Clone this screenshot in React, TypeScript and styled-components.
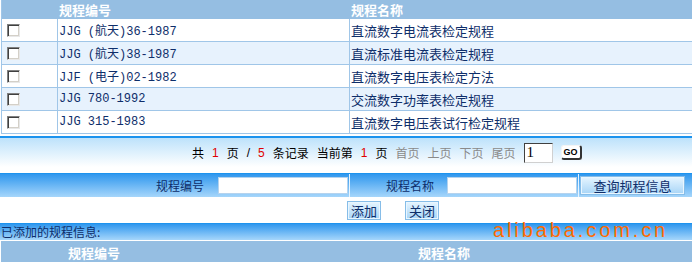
import React from 'react';
import styled, { createGlobalStyle } from 'styled-components';

const GlobalStyle = createGlobalStyle`
  body {
    margin: 0;
    background: #fff;
    font-family: "Liberation Sans", "Noto Sans CJK SC", sans-serif;
  }
`;

const color = {
  head: '#95bee2',
  line: '#a0c6e8',
  alt: '#e7f2fd',
  navy: '#0e2e6a',
  blue: '#1c93ee',
};

const Page = styled.div({
  height: 262,
  overflow: 'hidden',
  position: 'relative',
  width: 692,
});

const Grid = styled.div({
  borderLeft: `1px solid ${color.line}`,
  marginLeft: 1,
});

const Row = styled.div<{ $alt?: boolean; $head?: boolean }>((p) => ({
  background: p.$head ? color.head : p.$alt ? color.alt : '#fff',
  borderBottom: p.$head ? 'none' : `1px solid ${color.line}`,
  display: 'grid',
  gridTemplateColumns: '55px 292px 1fr',
  height: p.$head ? 19 : 22,
}));

const Cell = styled.div<{ $mono?: boolean; $head?: boolean; $first?: boolean }>((p) => ({
  alignItems: 'center',
  borderLeft: p.$first || p.$head ? 'none' : `1px solid ${color.line}`,
  color: p.$head ? '#fff' : color.navy,
  display: 'flex',
  fontFamily: p.$mono
    ? '"Liberation Mono", "Noto Sans CJK SC", monospace'
    : '"Noto Sans CJK SC", sans-serif',
  fontSize: p.$mono ? 12 : 13,
  fontWeight: p.$head ? 700 : 400,
  paddingLeft: p.$first ? 5 : p.$head ? 2 : 1,
  whiteSpace: 'nowrap',
}));

const Check = styled.input.attrs({ type: 'checkbox' })({
  appearance: 'none',
  background: '#fff',
  border: '1px solid',
  borderColor: '#808080 #e8e8e8 #e8e8e8 #808080',
  boxShadow: 'inset 1px 1px 0 #404040, inset -1px -1px 0 #d4d0c8',
  boxSizing: 'border-box',
  height: 13,
  margin: 0,
  width: 13,
});

const Pager = styled.div({
  alignItems: 'center',
  background: 'linear-gradient(#bde2fb, #fff)',
  borderTop: `2px solid ${color.blue}`,
  display: 'flex',
  fontFamily: '"Liberation Sans", "Noto Sans CJK SC", sans-serif',
  fontSize: 12,
  gap: 8,
  height: 29,
  marginTop: 2,
  paddingLeft: 192,
});

const Word = styled.span<{ $tone?: 'red' | 'grey' }>((p) => ({
  color: p.$tone === 'red' ? '#e00000' : p.$tone === 'grey' ? '#8a8a8a' : '#000',
}));

const PageInput = styled.input({
  background: '#fff',
  border: '1px solid',
  borderColor: '#404040 #d0d0d0 #d0d0d0 #404040',
  boxSizing: 'border-box',
  fontFamily: '"Liberation Serif", serif',
  fontSize: 15,
  height: 20,
  margin: 0,
  padding: '0 2px',
  width: 29,
});

const GoButton = styled.button({
  background: '#fff',
  border: '1px solid #f4f4f4',
  borderBottom: '2px solid #333',
  borderRadius: 3,
  borderRight: '2px solid #333',
  boxSizing: 'border-box',
  fontFamily: '"Liberation Sans", sans-serif',
  fontSize: 9,
  fontWeight: 700,
  height: 15,
  lineHeight: '11px',
  marginLeft: 0,
  padding: 0,
  width: 21,
});

const SearchBar = styled.div({
  alignItems: 'center',
  background: 'linear-gradient(#2f97ee, #a6d6fb)',
  borderTop: `1px solid ${color.blue}`,
  display: 'flex',
  height: 23,
  marginTop: 6,
});

const Label = styled.span<{ $width?: number; $left?: number }>((p) => ({
  color: color.navy,
  fontFamily: '"Noto Sans CJK SC", sans-serif',
  fontSize: 12,
  marginLeft: p.$left ?? 0,
  textAlign: 'right',
  width: p.$width,
}));

const Field = styled.input<{ $left: number }>((p) => ({
  background: '#fff',
  border: '1px solid #b5d3ee',
  boxSizing: 'border-box',
  height: 17,
  margin: 0,
  marginLeft: p.$left,
  width: 130,
}));

const Divider = styled.span({
  alignSelf: 'stretch',
  background: '#e6f4ff',
  marginLeft: 1,
  width: 1,
});

const BlueButton = styled.button<{ $width: number }>((p) => ({
  background: 'linear-gradient(#e6f5ff, #a8d5f7)',
  border: '1px solid #86bde8',
  boxShadow: 'inset 0 0 0 1px #e9f6ff',
  boxSizing: 'border-box',
  color: color.navy,
  fontFamily: '"Noto Sans CJK SC", sans-serif',
  fontSize: 13,
  height: 19,
  lineHeight: '15px',
  padding: 0,
  width: p.$width,
}));

const Actions = styled.div({
  alignItems: 'center',
  display: 'flex',
  gap: 24,
  height: 26,
  paddingLeft: 347,
});

const AddedBar = styled.div({
  background: 'linear-gradient(#2f97ee, #a6d6fb)',
  borderTop: `1px solid ${color.blue}`,
  color: color.navy,
  fontFamily: '"Noto Sans CJK SC", sans-serif',
  fontSize: 12,
  height: 16,
  lineHeight: '16px',
  paddingLeft: 1,
});

const AddedHead = styled.div({
  background: color.head,
  display: 'grid',
  gridTemplateColumns: '349px 1fr',
  height: 22,
  marginLeft: 1,
  marginTop: 1,
});

const HeadText = styled.span<{ $pad: number }>((p) => ({
  alignItems: 'center',
  color: '#fff',
  display: 'flex',
  fontFamily: '"Noto Sans CJK SC", sans-serif',
  fontSize: 13,
  fontWeight: 700,
  paddingLeft: p.$pad,
}));

const Watermark = styled.div({
  color: '#ff6a00',
  fontFamily: '"Liberation Sans", sans-serif',
  fontSize: 20,
  left: 493,
  letterSpacing: 2.9,
  lineHeight: '24px',
  pointerEvents: 'none',
  position: 'absolute',
  top: 218,
});

const rules = [
  ['JJG (航天)36-1987', '直流数字电流表检定规程'],
  ['JJG (航天)38-1987', '直流标准电流表检定规程'],
  ['JJF (电子)02-1982', '直流数字电压表检定方法'],
  ['JJG 780-1992', '交流数字功率表检定规程'],
  ['JJG 315-1983', '直流数字电压表试行检定规程'],
];

const App: React.FC = () => (
  <Page>
    <GlobalStyle />
    <Grid>
      <Row $head>
        <Cell $head />
        <Cell $head>规程编号</Cell>
        <Cell $head>规程名称</Cell>
      </Row>
      {rules.map(([code, name], i) => (
        <Row key={code} $alt={i % 2 === 1}>
          <Cell $first>
            <Check />
          </Cell>
          <Cell $mono>{code}</Cell>
          <Cell>{name}</Cell>
        </Row>
      ))}
    </Grid>

    <Pager>
      <Word>共</Word>
      <Word $tone="red">1</Word>
      <Word>页</Word>
      <Word>/</Word>
      <Word $tone="red">5</Word>
      <Word>条记录</Word>
      <Word>当前第</Word>
      <Word $tone="red">1</Word>
      <Word>页</Word>
      <Word $tone="grey">首页</Word>
      <Word $tone="grey">上页</Word>
      <Word $tone="grey">下页</Word>
      <Word $tone="grey">尾页</Word>
      <PageInput defaultValue="1" />
      <GoButton>GO</GoButton>
    </Pager>

    <SearchBar>
      <Label $width={204}>规程编号</Label>
      <Field $left={14} />
      <Divider />
      <Label $left={36}>规程名称</Label>
      <Field $left={13} />
      <Divider />
      <BlueButton $width={105} style={{ marginLeft: 1 }}>查询规程信息</BlueButton>
    </SearchBar>

    <Actions>
      <BlueButton $width={34}>添加</BlueButton>
      <BlueButton $width={34}>关闭</BlueButton>
    </Actions>

    <AddedBar>已添加的规程信息:</AddedBar>
    <AddedHead>
      <HeadText $pad={67}>规程编号</HeadText>
      <HeadText $pad={68}>规程名称</HeadText>
    </AddedHead>

    <Watermark>alibaba.com.cn</Watermark>
  </Page>
);

export default App;
